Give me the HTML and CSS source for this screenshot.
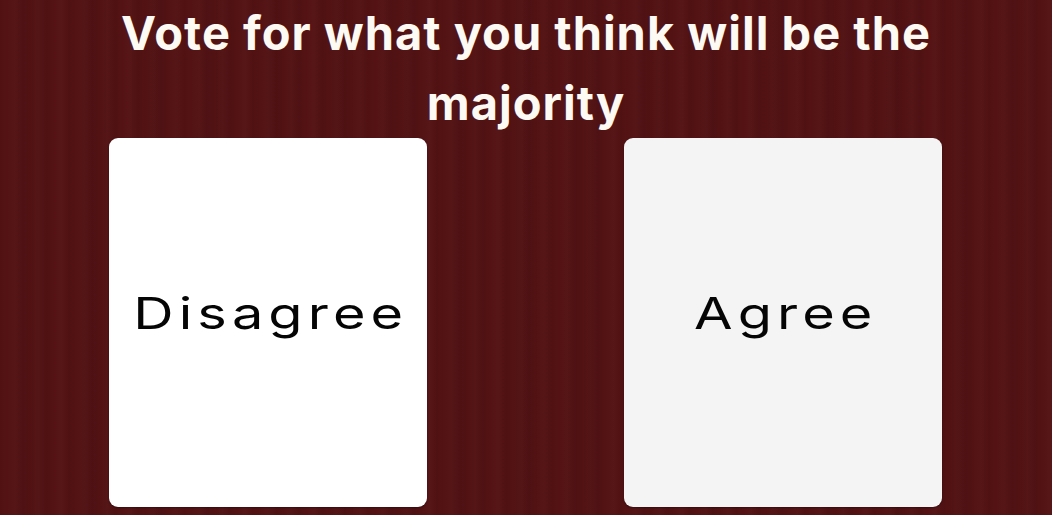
FILE: index.html
```html
<!DOCTYPE html>
<html lang="en">
<head>
    <meta charset="UTF-8">
    <meta name="viewport" content="width=device-width, initial-scale=1.0">
    <title>Majority Vote</title>
    <link rel="stylesheet" href="styles.css">
</head>
<body>

<div class="page">
    <h1 class="question">Vote for what you think will be the majority</h1>

    <!-- Vote options -->
    <div class="options">
        <button class="option option-left" type="button"><span class="option-label">Disagree</span></button>
        <button class="option option-right" type="button"><span class="option-label">Agree</span></button>
    </div>
</div>

</body>
</html>
```

FILE: styles.css
```css
html, body {
    margin: 0;
    height: 100%;
}

body {
    font-family: "Inter", "Open Sans", sans-serif;
    background-color: #541214;
    background-image:
        repeating-linear-gradient(90deg,
            rgba(0, 0, 0, 0.04) 0px,
            rgba(0, 0, 0, 0) 7px,
            rgba(255, 255, 255, 0.015) 15px,
            rgba(0, 0, 0, 0.04) 23px),
        repeating-linear-gradient(90deg,
            rgba(0, 0, 0, 0) 0px,
            rgba(0, 0, 0, 0.03) 31px,
            rgba(0, 0, 0, 0) 62px);
}

.page {
    display: flex;
    flex-direction: column;
    align-items: center;
    height: 100%;
}

.question {
    width: 880px;
    margin: -2px 0 0;
    color: #fdf9f3;
    font-size: 47px;
    font-weight: 700;
    letter-spacing: 1px;
    line-height: 70px;
    text-align: center;
}

.options {
    display: flex;
    justify-content: space-between;
    box-sizing: border-box;
    width: 100%;
    padding: 0 110px 0 109px;
}

.option {
    width: 318px;
    height: 369px;
    padding: 0 0 19px 0;
    border: none;
    border-radius: 9px;
    font-family: inherit;
    font-size: 44px;
    font-weight: 400;
    color: #050505;
    box-shadow: 0 1px 2px rgba(0, 0, 0, 0.35);
    cursor: pointer;
}

/* wide, round lettering for the choices */
.option-label {
    display: inline-block;
    padding-left: 4px;
    letter-spacing: 4px;
    transform: scaleX(1.27);
}

.option-left {
    background-color: #ffffff;
}

.option-right {
    background-color: #f4f4f4;
}
```
